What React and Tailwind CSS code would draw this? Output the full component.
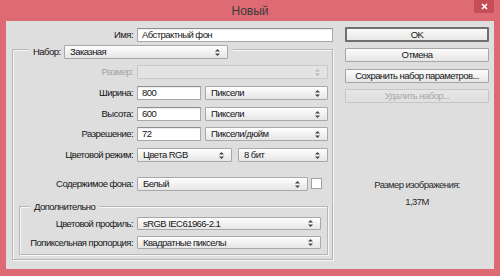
import React from "react";

const FONT = { fontFamily: '"Liberation Sans", Arial, sans-serif' };

function Arrows({ light }) {
  const c = light ? "#b5b5b5" : "#444";
  return (
    <svg width="5" height="7" viewBox="0 0 5 7" className="shrink-0">
      <path d="M2.5 0 L5 2.6 L0 2.6 Z" fill={c} />
      <path d="M0 4.4 L5 4.4 L2.5 7 Z" fill={c} />
    </svg>
  );
}

function Select({ w, text, disabled, h = "h-[14px]" }) {
  return (
    <div
      className={`${w} ${h} flex items-center justify-between pl-[5px] pr-[7px] border rounded-[1px] ${
        disabled
          ? "border-[#c8c8c8] bg-[#e3e3e3]"
          : "border-[#a8a8a8] bg-gradient-to-b from-[#fefefe] to-[#e6e6e6]"
      }`}
    >
      <span className="leading-none text-[#161616] whitespace-nowrap">{text}</span>
      <Arrows light={disabled} />
    </div>
  );
}

function Input({ w, text }) {
  return (
    <div
      className={`${w} h-[14px] flex items-center pl-[4px] bg-white border border-[#a9a9a9] border-t-[#8e8e8e] shadow-[inset_0_1px_1px_rgba(0,0,0,0.08)]`}
    >
      <span className="leading-none text-[#161616] whitespace-nowrap">{text}</span>
    </div>
  );
}

function Row({ label, labelW, mt, children, dim }) {
  return (
    <div className={`flex items-center ${mt}`}>
      <div
        className={`${labelW} shrink-0 text-right leading-none whitespace-nowrap ${
          dim ? "text-[#a3a3a3]" : "text-[#161616]"
        }`}
      >
        {label}
      </div>
      <div className="ml-[4px] flex items-center">{children}</div>
    </div>
  );
}

function Button({ text, primary, disabled, mt }) {
  return (
    <div
      className={`${mt} w-[144px] flex items-center justify-center rounded-[1px] bg-gradient-to-b ${
        primary
          ? "h-[15px] border-2 border-[#6f6f6f] from-[#fafafa] to-[#e8e8e8]"
          : disabled
          ? "h-[14px] border border-[#c6c6c6] from-[#e6e6e6] to-[#e0e0e0]"
          : "h-[14px] border border-[#a6a6a6] from-[#fcfcfc] to-[#e6e6e6]"
      }`}
    >
      <span
        className={`leading-none whitespace-nowrap ${
          disabled ? "text-[#a8a8a8]" : "text-[#161616]"
        }`}
      >
        {text}
      </span>
    </div>
  );
}

export default function App() {
  return (
    <div
      className="w-[500px] h-[276px] bg-[#de6a74] flex flex-col text-[9.5px] tracking-[-0.55px] overflow-hidden"
      style={FONT}
    >
      {/* title bar */}
      <div className="relative h-[21px] flex items-center justify-center">
        <span className="text-[12px] tracking-normal text-[#3a3a3a] leading-none mt-[1px]">
          Новый
        </span>
        <div className="absolute right-[6px] top-0 w-[20px] h-[13px] bg-[#c64d57] flex items-center justify-center">
          <svg width="7" height="7" viewBox="0 0 7 7">
            <path d="M1 1 L6 6 M6 1 L1 6" stroke="#fff" strokeWidth="1.6" />
          </svg>
        </div>
      </div>

      {/* client */}
      <div className="ml-[6px] mr-[6px] h-[248px] bg-[#dedede] flex">
        {/* left column */}
        <div className="w-[327px] flex flex-col">
          <Row label="Имя:" labelW="w-[127px]" mt="mt-[7px]">
            <Input w="w-[196px]" text="Абстрактный фон" />
          </Row>

          {/* outer group */}
          <div className="ml-[6px] mt-[7px] w-[321px] h-[211px] border border-[#b6b6b6] shadow-[1px_1px_0_#f6f6f6,inset_1px_1px_0_#f6f6f6] flex flex-col">
            <div className="mt-[-5px] ml-[15px] self-start flex items-center bg-[#dedede] px-[5px]">
              <span className="w-[31px] shrink-0 leading-none text-[#161616] whitespace-nowrap">Набор:</span>
              <Select w="w-[164px]" text="Заказная" />
            </div>

            <Row label="Размер:" labelW="w-[120px]" mt="mt-[6px]" dim>
              <Select w="w-[191px]" text="" disabled />
            </Row>
            <Row label="Ширина:" labelW="w-[120px]" mt="mt-[7px]">
              <Input w="w-[64px]" text="800" />
              <div className="ml-[4px]">
                <Select w="w-[123px]" text="Пиксели" />
              </div>
            </Row>
            <Row label="Высота:" labelW="w-[120px]" mt="mt-[7px]">
              <Input w="w-[64px]" text="600" />
              <div className="ml-[4px]">
                <Select w="w-[123px]" text="Пиксели" />
              </div>
            </Row>
            <Row label="Разрешение:" labelW="w-[120px]" mt="mt-[6px]">
              <Input w="w-[64px]" text="72" />
              <div className="ml-[4px]">
                <Select w="w-[123px]" text="Пиксели/дюйм" />
              </div>
            </Row>
            <Row label="Цветовой режим:" labelW="w-[120px]" mt="mt-[7px]">
              <Select w="w-[95px]" text="Цвета RGB" />
              <div className="ml-[6px]">
                <Select w="w-[90px]" text="8 бит" />
              </div>
            </Row>
            <Row label="Содержимое фона:" labelW="w-[120px]" mt="mt-[15px]">
              <Select w="w-[171px]" text="Белый" />
              <div className="ml-[3px] w-[11px] h-[11px] bg-white border border-[#a0a0a0] mt-[-2px]" />
            </Row>

            {/* advanced group */}
            <div className="ml-[6px] mt-[15px] w-[309px] h-[49px] border border-[#b6b6b6] shadow-[1px_1px_0_#f6f6f6,inset_1px_1px_0_#f6f6f6] flex flex-col">
              <div className="mt-[-7px] ml-[10px] self-start bg-[#dedede] px-[4px] h-[13px] flex items-center leading-none text-[#161616] whitespace-nowrap">
                Дополнительно
              </div>
              <Row label="Цветовой профиль:" labelW="w-[113px]" mt="mt-[4px]">
                <Select w="w-[184px]" h="h-[13px]" text="sRGB IEC61966-2.1" />
              </Row>
              <Row
                label="Попиксельная пропорция:"
                labelW="w-[113px]"
                mt="mt-[6px]"
              >
                <Select w="w-[184px]" h="h-[13px]" text="Квадратные пикселы" />
              </Row>
            </div>
          </div>
        </div>

        {/* right column */}
        <div className="ml-[12px] flex flex-col">
          <Button text="OK" primary mt="mt-[6px]" />
          <Button text="Отмена" mt="mt-[6px]" />
          <Button text="Сохранить набор параметров..." mt="mt-[7px]" />
          <Button text="Удалить набор..." disabled mt="mt-[6px]" />
          <div className="mt-[75px] w-[144px] text-center leading-[13px] text-[#2a2a2a] whitespace-nowrap">
            Размер изображения:
          </div>
          <div className="mt-[4px] w-[144px] text-center leading-[13px] text-[#2a2a2a]">
            1,37M
          </div>
        </div>
      </div>
    </div>
  );
}
